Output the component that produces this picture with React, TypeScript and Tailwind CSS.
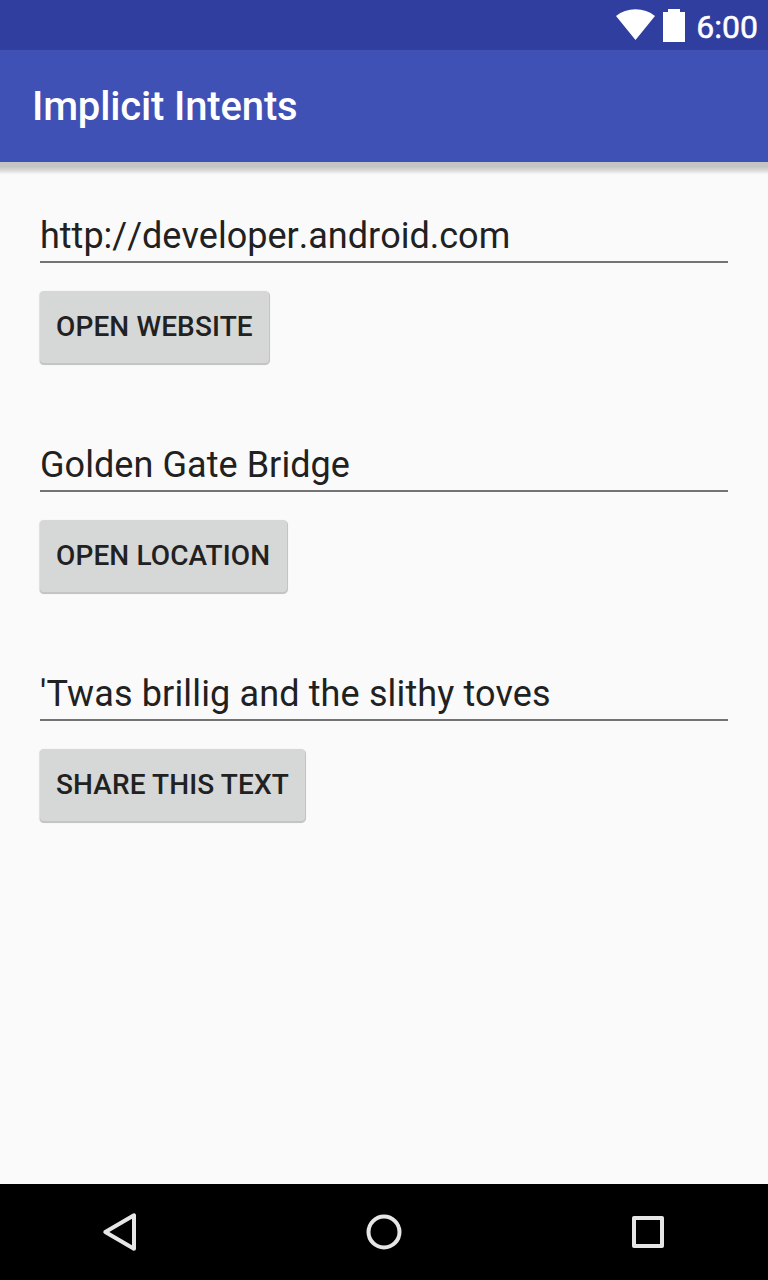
import React from "react";

const fields = [
  { value: "http://developer.android.com", action: "OPEN WEBSITE", width: "w-[229px]", text: "[font-kerning:none]" },
  { value: "Golden Gate Bridge", action: "OPEN LOCATION", width: "w-[247px]", text: "tracking-[0.06px]" },
  { value: "'Twas brillig and the slithy toves", action: "SHARE THIS TEXT", width: "w-[265px]", text: "tracking-[0.14px]" },
];

export default function App() {
  return (
    <div className="flex h-[1280px] w-[768px] flex-col overflow-hidden bg-[#fafafa] font-['Roboto',sans-serif]">
      <div className="relative z-20 flex h-[50px] shrink-0 items-start justify-end bg-[#303f9f] pr-[10px] text-white">
        <svg className="mt-[9px] h-[32px] w-[40px]" viewBox="0 0 40 32" fill="currentColor">
          <path d="M19.500 31 0 7C5.500 2.500 12 0.300 19.500 0.300S33.500 2.500 39 7z" />
        </svg>
        <svg className="ml-[7px] mt-[9px] h-[33px] w-[22px]" viewBox="0 0 22 33" fill="currentColor">
          <path d="M5 0h12v3h5v30H0V3h5z" />
        </svg>
        <span className="ml-[11px] mt-[7px] text-[32px] leading-[40px] [-webkit-text-stroke:0.5px_white]">6:00</span>
      </div>
      <header className="relative z-10 shrink-0 bg-[#3f51b5] pl-8 text-white">
        <h1 className="flex h-[112px] items-center pt-[2px] text-[40px] font-medium leading-[48px] tracking-[-0.15px]">Implicit Intents</h1>
        <div className="absolute inset-x-0 top-full h-[12px] bg-[linear-gradient(#c3c3c3,#c5c5c5_40%,#dadada_70%,#f6f6f6)]" />
      </header>
      <main className="flex-1 px-10 pt-[48px] text-[#212121]">
        {fields.map((f) => (
          <section key={f.action} className="h-[229px]">
            <div className={`h-[53px] border-b-2 border-[#737373] text-[36px] leading-[52px] whitespace-nowrap ${f.text}`}>{f.value}</div>
            <button className={`mt-[28px] flex h-[72px] items-center justify-start rounded-[4px] bg-[#d6d7d7] pb-px pl-4 text-[28px] font-medium tracking-[0.12px] whitespace-nowrap shadow-[1px_1px_0_#c3c4c4,0_2px_0_#c3c4c4,-1px_1px_0_#e0e0e0,0_1px_1px_1px_#e0e0e0] ${f.width}`}>
              {f.action}
            </button>
          </section>
        ))}
      </main>
      <nav className="flex h-24 shrink-0 items-center justify-between bg-black px-[90px] text-[#e6e6e6]">
        <svg className="h-16 w-[60px]" viewBox="0 0 60 64" fill="none" stroke="currentColor" strokeWidth="4" strokeLinejoin="round">
          <path d="M44 15.300v33.400L15.300 32z" />
        </svg>
        <svg className="h-16 w-[60px]" viewBox="0 0 60 64" fill="none" stroke="currentColor" strokeWidth="4">
          <circle cx="30" cy="32" r="15.500" />
        </svg>
        <svg className="h-16 w-[60px]" viewBox="0 0 60 64" fill="none" stroke="currentColor" strokeWidth="4" strokeLinejoin="round">
          <path d="M16 18h28v28H16z" />
        </svg>
      </nav>
    </div>
  );
}
